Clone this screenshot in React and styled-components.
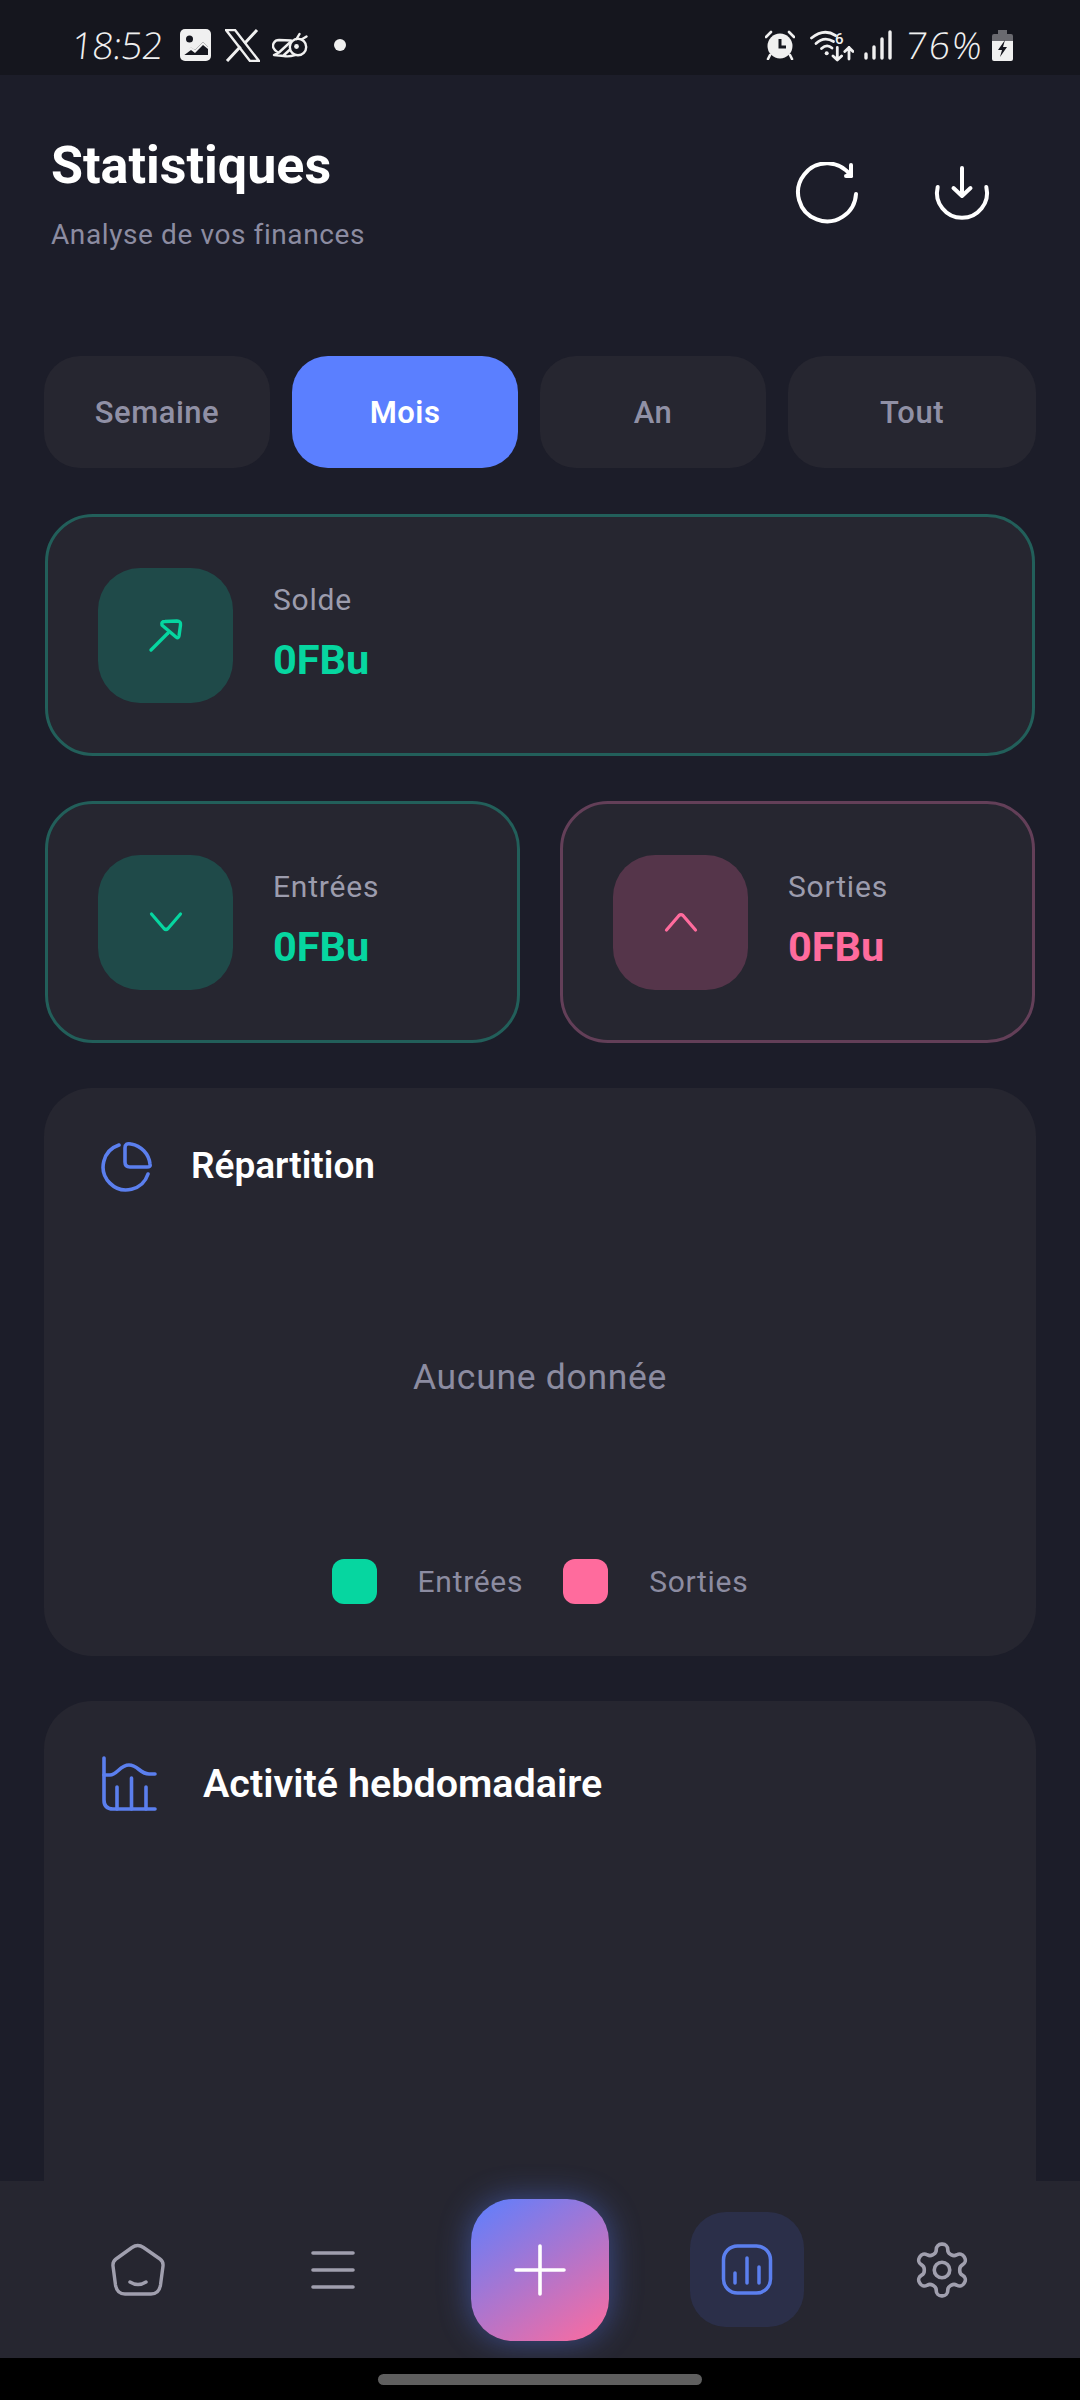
import styled, { createGlobalStyle } from "styled-components"

const GlobalStyle = createGlobalStyle`
    html, body {
        margin: 0;
        padding: 0;
        background: #1c1d29;
    }
    * {
        box-sizing: border-box;
    }
`;

const GREEN = "#06d6a0";
const PINK = "#ff6b9d";
const BLUE = "#5b7fee";

const Screen = styled.div`
    position: relative;
    width: 1080px;
    height: 2400px;
    overflow: hidden;
    background: #1c1d29;
    font-family: Roboto, "Liberation Sans", sans-serif;
`;

const StatusBar = styled.div`
    height: 75px;
    padding: 15px 67px 0 72px;
    background: #15161e;
    display: flex;
    align-items: center;
    justify-content: space-between;
`;
const StatusGroup = styled.div`
    display: flex;
    align-items: center;
`;
const Slot = styled.span`
    display: flex;
    align-items: center;
    margin-right: ${(p) => p.$right || 0}px;
`;
const HandText = styled.span`
    color: #f0f0f0;
    font-family: "Open Sans", Roboto, sans-serif;
    font-weight: 300;
    font-size: 37px;
    line-height: 40px;
    letter-spacing: ${(p) => p.$spacing}px;
    transform: skewX(-6deg);
`;
const Dot = styled.span`
    width: 12px;
    height: 12px;
    border-radius: 50%;
    background: #f0f0f0;
`;

const Header = styled.div`
    display: flex;
    justify-content: space-between;
    padding: 61px 88px 0 51px;
    height: 281px;
`;
const Title = styled.h1`
    margin: 0;
    color: #fff;
    font-size: 52px;
    line-height: 60px;
    font-weight: 700;
`;
const Subtitle = styled.p`
    margin: 22px 0 0;
    color: #8c8ca1;
    font-size: 28px;
    line-height: 34px;
    letter-spacing: 0.6px;
`;
const Actions = styled.div`
    display: flex;
    align-items: center;
    gap: 74px;
    margin-top: 26px;
    height: 64px;
`;

const Content = styled.div`
    padding: 0 44px;
    display: flex;
    flex-direction: column;
`;

const Tabs = styled.div`
    display: grid;
    grid-template-columns: 226px 226px 226px 1fr;
    gap: 22px;
    margin-bottom: 46px;
`;
const Tab = styled.div`
    height: 112px;
    border-radius: 36px;
    display: flex;
    align-items: center;
    justify-content: center;
    background: ${(p) => (p.$active ? "#5b7fff" : "#262630")};
    color: ${(p) => (p.$active ? "#fff" : "#9090a5")};
    font-size: 31px;
    font-weight: ${(p) => (p.$active ? 600 : 500)};
    letter-spacing: 0.5px;
`;

const Row = styled.div`
    display: grid;
    grid-template-columns: 1fr 1fr;
    gap: 40px;
    margin: 0 1px 45px;
`;
const StatCard = styled.div`
    height: 242px;
    margin: ${(p) => (p.$wide ? "0 1px 45px" : "0")};
    padding: 0 50px;
    border-radius: 48px;
    border: 3px solid ${(p) => p.$border};
    background: #262630;
    display: flex;
    align-items: center;
    gap: 40px;
`;
const IconBox = styled.div`
    width: 135px;
    height: 135px;
    border-radius: 42px;
    background: ${(p) => p.$bg};
    display: flex;
    align-items: center;
    justify-content: center;
    flex-shrink: 0;
`;
const StatText = styled.div`
    display: flex;
    flex-direction: column;
    padding-bottom: 4px;
`;
const StatLabel = styled.span`
    color: #9c9cad;
    font-size: 30px;
    line-height: 36px;
    letter-spacing: 0.8px;
`;
const StatValue = styled.span`
    margin-top: 17px;
    color: ${(p) => p.$color};
    font-size: 41.5px;
    line-height: 49px;
    font-weight: 700;
`;

const Panel = styled.div`
    height: ${(p) => p.$height}px;
    margin-bottom: 45px;
    border-radius: 48px;
    background: #262630;
    display: flex;
    flex-direction: column;
    flex-shrink: 0;
`;
const PanelHeader = styled.div`
    display: flex;
    align-items: center;
    gap: ${(p) => p.$gap}px;
    padding: ${(p) => p.$top}px 0 0 57px;
`;
const PanelTitle = styled.h2`
    margin: 0;
    color: #fff;
    font-size: ${(p) => p.$size}px;
    line-height: 44px;
    font-weight: 600;
`;
const Empty = styled.div`
    margin-top: 165px;
    text-align: center;
    color: #8c8ca1;
    font-size: 35.5px;
    line-height: 40px;
    letter-spacing: 0.7px;
`;
const Legend = styled.div`
    margin-top: 162px;
    display: flex;
    justify-content: center;
    align-items: center;
`;
const Swatch = styled.span`
    width: 45px;
    height: 45px;
    border-radius: 12px;
    background: ${(p) => p.$color};
`;
const LegendLabel = styled.span`
    margin: 0 40px 0 41px;
    color: #8c8ca1;
    font-size: 30px;
    letter-spacing: 0.7px;
    &:last-child {
        margin-right: 0;
    }
`;

const BottomArea = styled.div`
    position: absolute;
    left: 0;
    right: 0;
    bottom: 0;
`;
const Nav = styled.div`
    height: 177px;
    background: #262630;
    display: grid;
    grid-template-columns: 276px 114px 300px 114px 276px;
    align-items: center;
    justify-items: center;
`;
const NavItem = styled.div`
    width: 114px;
    height: 115px;
    border-radius: 36px;
    background: ${(p) => (p.$active ? "#2b2f49" : "transparent")};
    display: flex;
    align-items: center;
    justify-content: center;
`;
const Fab = styled.div`
    width: 138px;
    height: 142px;
    border-radius: 42px;
    background: linear-gradient(145deg, #5b7fff, #ff6b9d);
    box-shadow: 0 0 32px rgba(91, 127, 255, 0.45);
    display: flex;
    align-items: center;
    justify-content: center;
`;
const GestureBar = styled.div`
    position: relative;
    height: 42px;
    background: #000;
    display: flex;
    justify-content: center;
    padding-top: 16px;
`;
const GesturePill = styled.div`
    width: 324px;
    height: 11px;
    border-radius: 6px;
    background: #5f5f5f;
`;

const ImageIcon = () => (
    <svg width="31" height="32" viewBox="0 0 31 32">
        <rect width="31" height="32" rx="5" fill="#f0f0f0" />
        <circle cx="9.5" cy="10" r="3.5" fill="#15161e" />
        <path d="M3 26 L11 18.5 L15 21 L23 13 L28 18 V26 Z" fill="#15161e" />
        <path d="M3 24 L11 18 L15 21 L23 13 L28 18 V20 L23 16 L15 24 L11 21 L3 27 Z" fill="#f0f0f0" />
    </svg>
);

const XIcon = () => (
    <svg width="35" height="33" viewBox="0 0 35 33">
        <path d="M1 1 H10 L34 32 H25 Z" fill="none" stroke="#f0f0f0" strokeWidth="2.4" />
        <path d="M2 32 L15.5 17.5 M32 1 L19.5 14.5" stroke="#f0f0f0" strokeWidth="3" />
    </svg>
);

const BeeIcon = () => (
    <svg width="36" height="29" viewBox="0 0 36 29" fill="none" stroke="#f0f0f0" strokeWidth="2.4" strokeLinecap="round" strokeLinejoin="round">
        <circle cx="26" cy="16" r="8.2" />
        <circle cx="24.5" cy="15.5" r="2.4" fill="#f0f0f0" stroke="none" />
        <path d="M19 9.5 L7 9 C2 9 0 14 1.5 17 C3 20 6 21.5 7 21.5 L2 24 L12 25 C16 26 20 25 23 24" />
        <path d="M7.5 21 L19 10.5 M12 24 L17.5 19" />
        <path d="M24.5 8 L27.5 3 M29.5 8.5 L34.5 5.5" />
    </svg>
);

const AlarmIcon = () => (
    <svg width="30" height="30" viewBox="0 0 30 30">
        <circle cx="15" cy="16" r="12.5" fill="#f0f0f0" />
        <path d="M15 9 V17 H21" fill="none" stroke="#15161e" strokeWidth="3" />
        <path d="M1 7 L6 2 M29 7 L24 2 M5 25 L3 29 M25 25 L27 29" stroke="#f0f0f0" strokeWidth="2.6" strokeLinecap="round" />
    </svg>
);

const WifiIcon = () => (
    <svg width="44" height="33" viewBox="0 0 44 33" fill="none" stroke="#f0f0f0" strokeWidth="2.8" strokeLinecap="round" strokeLinejoin="round">
        <path d="M1.5 9 Q14 -1 25.5 6.5" />
        <path d="M6 14.5 Q14 7 23.5 12.5" />
        <path d="M11.5 19.5 Q17 14.5 22 19" />
        <circle cx="16.7" cy="24.3" r="2" fill="#f0f0f0" stroke="none" />
        <text x="25" y="15" fill="#f0f0f0" stroke="none" fontFamily="Roboto" fontWeight="500" fontSize="15">6</text>
        <path d="M27.3 18.5 V31 M23 27 L27.3 31 L31.6 27 M39 30 V18.5 M34.8 22.5 L39 18.5 L43 22.5" />
    </svg>
);

const SignalIcon = () => (
    <svg width="28" height="30" viewBox="0 0 28 30" stroke="#f0f0f0" strokeWidth="3.4" strokeLinecap="round">
        <path d="M2 28 V24 M10 28 V17 M18 28 V9 M26 28 V2" />
    </svg>
);

const BatteryIcon = () => (
    <svg width="21" height="31" viewBox="0 0 21 31">
        <path d="M6 0 H15 V4 H19 Q21 4 21 6 V11 H0 V6 Q0 4 2 4 H6 Z" fill="#6a6a70" />
        <path d="M0 11 H21 V29 Q21 31 19 31 H2 Q0 31 0 29 Z" fill="#f0f0f0" />
        <path d="M13 10 L6 20 H10 L8 27 L15 17 H11 Z" fill="#15161e" />
    </svg>
);

const RefreshIcon = () => (
    <svg width="64" height="64" viewBox="0 0 64 64" fill="none" stroke="#fff" strokeWidth="4" strokeLinecap="round" strokeLinejoin="round">
        <path d="M62 32 A29 29 0 1 1 57 14" />
        <path d="M57 3 V14 H52" />
    </svg>
);

const DownloadIcon = () => (
    <svg width="60" height="60" viewBox="0 0 60 60" fill="none" stroke="#fff" strokeWidth="4" strokeLinecap="round" strokeLinejoin="round">
        <path d="M5.7 23 A25 25 0 1 0 54.3 23" />
        <path d="M30 4 V32 M21.5 24 L30 32 L38.5 24" />
    </svg>
);

const ArrowIcon = () => (
    <svg width="36" height="36" viewBox="0 0 36 36" fill="none" stroke={GREEN} strokeWidth="3.4" strokeLinecap="round" strokeLinejoin="round">
        <path d="M3 33 L20 16" />
        <path d="M14 8 Q13 4.5 17 4.5 L29 4 Q33 4 32.5 8 L31 19 Q30.5 22 28 20 L15 9 Z" />
    </svg>
);

const Chevron = ({ color, up }) => (
    <svg width="36" height="22" viewBox="0 0 36 22" fill="none" stroke={color} strokeWidth="3.2" strokeLinecap="round" strokeLinejoin="round">
        <path d={up ? "M3.5 19 L16 4.5 Q18 2.5 20 4.5 L32.5 19" : "M3.5 3 L16 17.5 Q18 19.5 20 17.5 L32.5 3"} />
    </svg>
);

const PieIcon = () => (
    <svg width="52" height="52" viewBox="0 0 52 52" fill="none" stroke={BLUE} strokeWidth="3.6" strokeLinecap="round" strokeLinejoin="round">
        <path d="M18 5 A23 23 0 1 0 47 34" />
        <path d="M24 8 Q24 2.5 30 4 A23 23 0 0 1 49 24 Q50 27 46 27 H29 Q24 27 24 22 Z" />
    </svg>
);

const ActivityIcon = () => (
    <svg width="56" height="56" viewBox="0 0 56 56" fill="none" stroke={BLUE} strokeWidth="3.6" strokeLinecap="round" strokeLinejoin="round">
        <path d="M3 2 V44 Q3 53 12 53 H54" />
        <path d="M3 19 H9 C16 19 19 9 28 9 C37 9 39 18 48 18 H54" />
        <path d="M16 31 V53 M30.5 22 V53 M45 31 V53" />
    </svg>
);

const HomeIcon = () => (
    <svg width="56" height="56" viewBox="0 0 56 56" fill="none" stroke="#a09fae" strokeWidth="3.4" strokeLinecap="round" strokeLinejoin="round">
        <path d="M22 5.5 Q27.7 1.5 33.5 5.5 L50 17 Q53.5 19.5 53 24 L50.5 43 Q49 52 41 52 H15 Q7 52 5.5 43 L3 24 Q2.5 19.5 6 17 Z" />
        <path d="M20 40 Q28 45 36 40" />
    </svg>
);

const MenuIcon = () => (
    <svg width="44" height="38" viewBox="0 0 44 38" stroke="#a09fae" strokeWidth="3.6" strokeLinecap="round">
        <path d="M2 2 H42 M2 19 H42 M2 36 H42" />
    </svg>
);

const PlusIcon = () => (
    <svg width="52" height="52" viewBox="0 0 52 52" stroke="#fff" strokeWidth="3.6" strokeLinecap="round">
        <path d="M2 26 H50 M26 2 V50" />
    </svg>
);

const ChartIcon = () => (
    <svg width="56" height="56" viewBox="0 0 56 56" fill="none" stroke={BLUE} strokeWidth="3.5" strokeLinecap="round">
        <rect x="4.5" y="4" width="47" height="47" rx="14" />
        <path d="M16 31 V41 M28 16 V41 M40 25 V41" />
    </svg>
);

const GearIcon = () => (
    <svg width="62" height="62" viewBox="0 0 24 24" fill="none" stroke="#a09fae" strokeWidth="1.4" strokeLinecap="round" strokeLinejoin="round">
        <path d="M12.22 2h-.44a2 2 0 0 0-2 2v.18a2 2 0 0 1-1 1.73l-.43.25a2 2 0 0 1-2 0l-.15-.08a2 2 0 0 0-2.73.73l-.22.38a2 2 0 0 0 .73 2.73l.15.1a2 2 0 0 1 1 1.72v.51a2 2 0 0 1-1 1.74l-.15.09a2 2 0 0 0-.73 2.73l.22.38a2 2 0 0 0 2.73.73l.15-.08a2 2 0 0 1 2 0l.43.25a2 2 0 0 1 1 1.73V20a2 2 0 0 0 2 2h.44a2 2 0 0 0 2-2v-.18a2 2 0 0 1 1-1.73l.43-.25a2 2 0 0 1 2 0l.15.08a2 2 0 0 0 2.73-.73l.22-.39a2 2 0 0 0-.73-2.73l-.15-.08a2 2 0 0 1-1-1.74v-.5a2 2 0 0 1 1-1.74l.15-.09a2 2 0 0 0 .73-2.73l-.22-.38a2 2 0 0 0-2.73-.73l-.15.08a2 2 0 0 1-2 0l-.43-.25a2 2 0 0 1-1-1.73V4a2 2 0 0 0-2-2z" />
        <circle cx="12" cy="12" r="3" />
    </svg>
);

const App = () => {
    return (
        <Screen>
            <GlobalStyle />
            <StatusBar>
                <StatusGroup>
                    <Slot $right={17}><HandText $spacing={-0.5}>18:52</HandText></Slot>
                    <Slot $right={14}><ImageIcon /></Slot>
                    <Slot $right={12}><XIcon /></Slot>
                    <Slot $right={26}><BeeIcon /></Slot>
                    <Dot />
                </StatusGroup>
                <StatusGroup>
                    <Slot $right={15}><AlarmIcon /></Slot>
                    <Slot $right={10}><WifiIcon /></Slot>
                    <Slot $right={14}><SignalIcon /></Slot>
                    <Slot $right={8}><HandText $spacing={2}>76%</HandText></Slot>
                    <BatteryIcon />
                </StatusGroup>
            </StatusBar>

            <Header>
                <div>
                    <Title>Statistiques</Title>
                    <Subtitle>Analyse de vos finances</Subtitle>
                </div>
                <Actions>
                    <RefreshIcon />
                    <DownloadIcon />
                </Actions>
            </Header>

            <Content>
                <Tabs>
                    <Tab>Semaine</Tab>
                    <Tab $active>Mois</Tab>
                    <Tab>An</Tab>
                    <Tab>Tout</Tab>
                </Tabs>

                <StatCard $border="#225f5a" $wide>
                    <IconBox $bg="#1f4a49"><ArrowIcon /></IconBox>
                    <StatText>
                        <StatLabel>Solde</StatLabel>
                        <StatValue $color={GREEN}>0FBu</StatValue>
                    </StatText>
                </StatCard>

                <Row>
                    <StatCard $border="#225f5a">
                        <IconBox $bg="#1f4a49"><Chevron color={GREEN} /></IconBox>
                        <StatText>
                            <StatLabel>Entrées</StatLabel>
                            <StatValue $color={GREEN}>0FBu</StatValue>
                        </StatText>
                    </StatCard>
                    <StatCard $border="#633f58">
                        <IconBox $bg="#55354a"><Chevron color={PINK} up /></IconBox>
                        <StatText>
                            <StatLabel>Sorties</StatLabel>
                            <StatValue $color={PINK}>0FBu</StatValue>
                        </StatText>
                    </StatCard>
                </Row>

                <Panel $height={568}>
                    <PanelHeader $gap={38} $top={52}>
                        <PieIcon />
                        <PanelTitle $size={37}>Répartition</PanelTitle>
                    </PanelHeader>
                    <Empty>Aucune donnée</Empty>
                    <Legend>
                        <Swatch $color={GREEN} />
                        <LegendLabel>Entrées</LegendLabel>
                        <Swatch $color={PINK} />
                        <LegendLabel>Sorties</LegendLabel>
                    </Legend>
                </Panel>

                <Panel $height={700}>
                    <PanelHeader $gap={46} $top={55}>
                        <ActivityIcon />
                        <PanelTitle $size={39.5}>Activité hebdomadaire</PanelTitle>
                    </PanelHeader>
                </Panel>
            </Content>

            <BottomArea>
                <Nav>
                    <HomeIcon />
                    <MenuIcon />
                    <Fab><PlusIcon /></Fab>
                    <NavItem $active><ChartIcon /></NavItem>
                    <GearIcon />
                </Nav>
                <GestureBar>
                    <GesturePill />
                </GestureBar>
            </BottomArea>
        </Screen>
    )
}

export default App
